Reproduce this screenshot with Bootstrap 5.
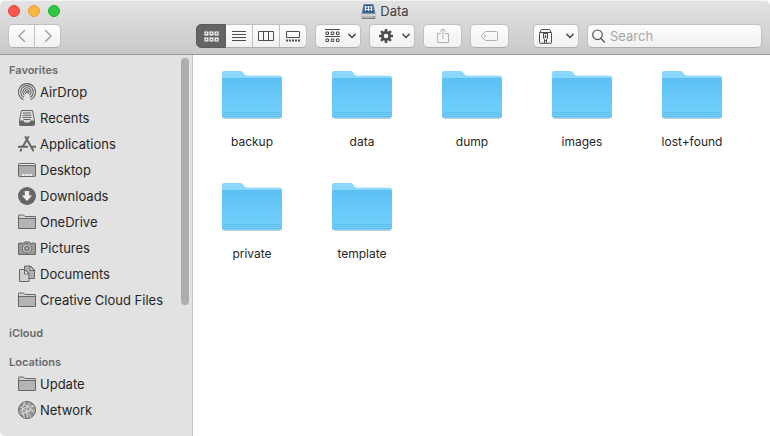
<!DOCTYPE html>
<html lang="en">
<head>
<meta charset="utf-8">
<meta name="viewport" content="width=device-width, initial-scale=1">
<title>Data</title>
<link href="https://cdn.jsdelivr.net/npm/bootstrap@5.3.0/dist/css/bootstrap.min.css" rel="stylesheet">
<style>
  body { font-family: Inter, "Liberation Sans", sans-serif; font-size: 13px; line-height: 18px; color: #262626; background: #fff; }
  svg { display: block; flex: none; }
  .window { border-radius: 6px 6px 5px 5px; overflow: hidden; }
  .window-head { background: linear-gradient(#e4e4e4, #c9c9c9); border-bottom: 1px solid #989898; box-shadow: inset 0 1px #f4f4f4; }
  .title-row { display: grid; grid-template-columns: 1fr auto 1fr; height: 24px; padding: 0 8px; }
  .lights { padding-top: 5px; }
  .light { width: 12px; height: 12px; border-radius: 50%; border: 1px solid; padding: 0; }
  .light-close { background: #fc5650; border-color: #e0443e; }
  .light-min { background: #fdb63d; border-color: #dfa035; }
  .light-max { background: #2bc840; border-color: #1fae33; }
  .title-text { font-size: 13px; line-height: 22px; color: #404040; }
  .toolbar { padding: 0 8px 6px; gap: 8px; }
  .tool { height: 24px; min-width: 0; padding: 0; border: 1px solid #c0c0c0; border-bottom-color: #adadad; border-radius: 5px; background: linear-gradient(#fdfdfd, #f1f1f1); color: #4c4c4c; display: flex; align-items: center; justify-content: center; }
  .tool:hover { color: #222; border-color: #aaa; }
  .tool-nav { width: 27px; color: #9b9b9b; }
  .tool-view { width: 28px; flex: none; }
  .tool-view.active { width: 30px; background: #646464; border-color: #5c5c5c; color: #fff; }
  .tool-menu { width: 46px; justify-content: space-between; padding: 0 3px 0 5px; }
  .tool-dim { width: 39px; color: #b0b0b0; }
  .nav-slot { width: 180px; }
  .search-box { height: 24px; border: 1px solid #c0c0c0; border-bottom-color: #adadad; border-radius: 5px; background: linear-gradient(#fdfdfd, #f1f1f1); padding: 0 4px; gap: 5px; color: #555; min-width: 0; }
  .search-box input { font-size: 13px; line-height: 18px; outline: 0; min-width: 0; }
  .search-box input::placeholder { color: #a6a6a6; opacity: 1; }
  .side { width: 193px; flex: none; background: #e2e2e2; border-right: 1px solid #c4c4c4; padding-top: 6px; }
  .side h2 { font-size: 11px; line-height: 18px; font-weight: 600; color: #6a6a6a; margin: 0; padding-left: 9px; }
  .side section { margin-bottom: 11px; }
  .side-link { display: flex; align-items: center; gap: 4px; height: 26px; padding-left: 18px; color: #262626; text-decoration: none; }
  .side-link svg { color: #666; }
  .thumb { position: absolute; top: 3px; right: 3px; width: 8px; height: 247px; border-radius: 4px; background: #adadad; }
  .files { display: grid; grid-template-columns: repeat(auto-fill, 110px); grid-auto-rows: 112px; align-content: start; padding: 14px 4px 0; }
  .file { display: flex; flex-direction: column; align-items: center; gap: 13px; font-size: 12px; color: #262626; text-decoration: none; }
</style>
</head>
<body>
<svg width="0" height="0" class="position-absolute" aria-hidden="true">
  <defs>
    <linearGradient id="blue" x1="0" y1="0" x2="0" y2="1"><stop offset="0" stop-color="#5cc1f5"/><stop offset="1" stop-color="#74d0fb"/></linearGradient>
    <symbol id="big-folder" viewBox="0 0 60 51">
      <path d="M1 48h58a2 2 0 0 1-2 2H3a2 2 0 0 1-2-2z" fill="#c9cdd0"/>
      <path d="M0 4a2 2 0 0 1 2-2h16c1.500 0 2.200.6 3 1.600l1.600 2c.7.8 1.400 1.100 2.500 1.100H58a2 2 0 0 1 2 2V20H0z" fill="#8ad7fd"/>
      <path d="M0 11a2 2 0 0 1 2-2h56a2 2 0 0 1 2 2v36a2 2 0 0 1-2 2H2a2 2 0 0 1-2-2z" fill="url(#blue)"/>
      <path d="M1 9.500h58" stroke="#5dbcec" stroke-width=".8"/>
      <path d="M0 43.500h60M0 45.500h60M0 47.500h60" stroke="#5fbbe9" stroke-width=".7"/>
    </symbol>
    <symbol id="chev" viewBox="0 0 10 8"><path d="M1.800 2.300 5 5.500l3.200-3.200" fill="none" stroke="currentColor" stroke-width="1.600" stroke-linecap="round" stroke-linejoin="round"/></symbol>
    <symbol id="folder" viewBox="0 0 18 18">
      <path d="M.5 15.500v-13q0-.5.500-.5h4.500l1.500 1.500h10q.5 0 .5.500v11.500z" fill="#d2d2d2" stroke="currentColor"/>
      <path d="M1 6h16v9H1z" fill="#b4b4b4"/><path d="M1 5.500h16" stroke="currentColor"/>
    </symbol>
  </defs>
</svg>
<div class="window d-flex flex-column min-vh-100">
  <header class="window-head">
    <div class="title-row">
      <div class="lights d-flex gap-2">
        <button class="light light-close" aria-label="Close"></button>
        <button class="light light-min" aria-label="Minimize"></button>
        <button class="light light-max" aria-label="Zoom"></button>
      </div>
      <h1 class="title-text d-flex fw-normal m-0">
        <svg class="me-1 mt-1" width="15" height="15" viewBox="0 0 15 15"><path d="M2.500 0h10L15 11H0z" fill="#8b98a6"/><path d="M3 .5h9l1.400 8.500H1.600z" fill="#365f94"/><path d="M3.500 3h8M3.500 5.500h8M4.500 2v5M7.500 2v5M10.500 2v5" stroke="#e6edf6" stroke-width="1"/><path d="M0 10.500h15V14q0 1-1 1H1q-1 0-1-1z" fill="#b8b8b8"/><path d="M0 10.500h15v1H0z" fill="#ececec"/><path d="M1 14.500h13" stroke="#777"/><circle cx="12.500" cy="13" r=".8" fill="#42b84f"/></svg>Data
      </h1>
      <span></span>
    </div>
    <div class="toolbar d-flex" role="toolbar" aria-label="Toolbar">
      <div class="nav-slot d-flex flex-shrink-0" role="group">
        <div class="btn-group">
          <button class="btn tool tool-nav" aria-label="Back"><svg width="10" height="14" viewBox="0 0 10 14"><path d="M7.500 1.500 2 7l5.500 5.500" fill="none" stroke="currentColor" stroke-width="1.400" stroke-linecap="round"/></svg></button>
          <button class="btn tool tool-nav" aria-label="Forward"><svg width="10" height="14" viewBox="0 0 10 14"><path d="M2.500 1.500 8 7l-5.500 5.500" fill="none" stroke="currentColor" stroke-width="1.400" stroke-linecap="round"/></svg></button>
        </div>
      </div>
      <div class="btn-group flex-shrink-0" role="group" aria-label="View">
        <button class="btn tool tool-view active" aria-label="Icons"><svg width="15" height="11" viewBox="0 0 15 11" fill="none" stroke="currentColor" stroke-width="1.200"><path d="M1 1h2.800v2.800H1zM6.100 1h2.800v2.800H6.100zM11.200 1H14v2.800h-2.800zM1 7.200h2.800V10H1zM6.100 7.200h2.800V10H6.100zM11.200 7.200H14V10h-2.800z"/></svg></button>
        <button class="btn tool tool-view" aria-label="List"><svg width="14" height="12" viewBox="0 0 14 12"><path d="M0 1.500h14M0 4.500h14M0 7.500h14M0 10.500h14" stroke="currentColor"/></svg></button>
        <button class="btn tool tool-view" aria-label="Columns"><svg width="16" height="11" viewBox="0 0 16 11"><path d="M.5.5h15v9H.5zM5.500.5v9M10.500.5v9" fill="none" stroke="currentColor" stroke-linejoin="round"/></svg></button>
        <button class="btn tool tool-view" aria-label="Gallery"><svg width="14" height="11" viewBox="0 0 14 11"><path d="M.5.500h13v6H.5z" fill="none" stroke="currentColor" stroke-linejoin="round"/><path d="M0 9.500h14" stroke="currentColor" stroke-width="2" stroke-dasharray="2 1"/></svg></button>
      </div>
      <button class="btn tool tool-menu flex-shrink-0" aria-label="Group"><svg class="ms-1" width="15" height="14" viewBox="0 0 15 14" fill="none" stroke="currentColor"><path d="M0 .5h15M0 7.500h15M1 3h2.500v2.500H1zM6.200 3h2.600v2.500H6.200zM11.500 3H14v2.500h-2.500zM1 10h2.500v2.500H1zM6.200 10h2.600v2.500H6.200zM11.500 10H14v2.500h-2.500z"/></svg><svg width="10" height="8"><use href="#chev"/></svg></button>
      <button class="btn tool tool-menu flex-shrink-0" aria-label="Action"><svg class="ms-1" width="14" height="14" viewBox="-7 -7 14 14"><g fill="none" stroke="currentColor"><circle r="3.700" stroke-width="2.800"/><path d="M0-4.500V-7M0 4.500V7M-4.500 0H-7M4.500 0H7M-3.200-3.200-4.900-4.900M3.200 3.200 4.900 4.900M3.200-3.200 4.900-4.900M-3.200 3.200-4.900 4.900" stroke-width="2.600"/></g></svg><svg width="10" height="8"><use href="#chev"/></svg></button>
      <button class="btn tool tool-dim flex-shrink-0" aria-label="Share"><svg width="12" height="16" viewBox="0 0 12 16"><path d="M4 5.500H.5v9h11v-9H8M6 11V1M3 3.700 6 .8l3 2.900" fill="none" stroke="currentColor"/></svg></button>
      <button class="btn tool tool-dim flex-shrink-0" aria-label="Tags"><svg width="17" height="11" viewBox="0 0 17 11"><path d="M5 .5h10.500q1 0 1 1v7q0 1-1 1H5q-.7 0-1.200-.5L.8 5.700Q.3 5 .8 4.300l3-3.300Q4.300.5 5 .5z" fill="none" stroke="currentColor"/><circle cx="4" cy="5" r=".9" fill="currentColor"/></svg></button>
      <button class="btn tool tool-menu flex-shrink-0 ms-3" aria-label="Archive"><svg width="13" height="15" viewBox="0 0 13 15" fill="none" stroke="currentColor"><path d="M.5 4.500 2 1q.2-.5.800-.5h7.400q.6 0 .8.500l1.500 3.500v9q0 .8-.8.800H1.300q-.8 0-.8-.8zM.5 3.500h12"/><path d="M4.500 4v5l1 1.500V14M8.500 4v5l-1 1.500V14M4.500 4.500h4M5 11.500h3"/><path d="M6 6.500h1v2H6z" fill="currentColor" stroke-width=".6"/></svg><svg width="10" height="8"><use href="#chev"/></svg></button>
      <label class="search-box d-flex align-items-center flex-grow-1"><svg width="13" height="14" viewBox="0 0 13 14"><path d="m8.700 9.200 3.700 3.800" stroke="currentColor" stroke-width="1.300" stroke-linecap="round"/><circle cx="5.500" cy="5.800" r="4.800" fill="none" stroke="currentColor" stroke-width="1.200"/></svg><input class="flex-fill w-100 border-0 bg-transparent p-0" type="text" placeholder="Search" aria-label="Search"></label>
    </div>
  </header>
  <div class="d-flex flex-grow-1">
    <nav class="side position-relative" aria-label="Sidebar">
      <section>
        <h2>Favorites</h2>
        <a class="side-link" href="#"><svg width="18" height="18" viewBox="0 0 18 18"><g fill="none" stroke="currentColor" stroke-width="1.100" stroke-linecap="round"><path d="M5 16.600a8.500 8.500 0 1 1 8 0"/><path d="M5.600 14.200a6.300 6.300 0 1 1 6.800 0"/><path d="M6.200 11.900a4.100 4.100 0 1 1 5.600 0"/><path d="M7.700 10.300a2 2 0 1 1 2.600 0"/></g><circle cx="9" cy="9" r="1" fill="currentColor"/></svg>AirDrop</a>
        <a class="side-link" href="#"><svg width="18" height="18" viewBox="0 0 18 18"><path d="M3.500 1.500h11l2 10v4q0 1-1 1h-13q-1 0-1-1v-4z" fill="#ddd" stroke="currentColor"/><path d="M1.500 11.500h4q.5 2 2 2h3q1.500 0 2-2h4v4q0 1-1 1h-13q-1 0-1-1z" fill="currentColor"/><path d="M5 4h8M4.700 6.200h8.600M4.400 8.400h9.200M5.500 10.500h7" stroke="currentColor"/></svg>Recents</a>
        <a class="side-link" href="#"><svg width="18" height="18" viewBox="0 0 18 18"><g fill="none" stroke="currentColor" stroke-width="2" stroke-linecap="round"><path d="M10.300 2 5 11.300M7.500 2l7.700 13.500M3.200 14.500l-.6 1.200"/><path d="M0 11.700h10M13.500 11.700H18" stroke-linecap="butt"/></g></svg>Applications</a>
        <a class="side-link" href="#"><svg width="18" height="18" viewBox="0 0 18 18"><rect x=".5" y="2.500" width="17" height="13" rx="1" fill="#adadad" stroke="currentColor"/><path d="M1 3.500h16" stroke="#eee"/><path d="M1 4.500h16" stroke="currentColor"/><path d="M4 14h10" stroke="#eee" stroke-width="2" stroke-dasharray="2 .67"/></svg>Desktop</a>
        <a class="side-link" href="#"><svg width="18" height="18" viewBox="0 0 18 18"><circle cx="9" cy="9" r="9" fill="currentColor"/><path d="M6.800 4h4.400v4.500h3L9 14 3.800 8.500h3z" fill="#ececec"/></svg>Downloads</a>
        <a class="side-link" href="#"><svg width="18" height="18"><use href="#folder"/></svg>OneDrive</a>
        <a class="side-link" href="#"><svg width="18" height="18" viewBox="0 0 18 18"><path d="M.5 4.500h1V4h2.500v.5h1.200L6.500 3h5l1.300 1.500H14V4h2.500v.5h1v11H.5z" fill="#999" stroke="currentColor"/><circle cx="9" cy="9.500" r="4.500" fill="#ddd" stroke="currentColor"/><circle cx="9" cy="9.500" r="2.600" fill="#999" stroke="currentColor"/></svg>Pictures</a>
        <a class="side-link" href="#"><svg width="18" height="18" viewBox="0 0 18 18"><path d="M6.500 1h6l4 4v8.500h-10z" fill="#b0b0b0" stroke="currentColor"/><path d="M12 1v4.500h4.500z" fill="#ddd" stroke="currentColor"/><path d="M1.500 4.500h5.500l4 4v8h-9.500z" fill="#cfcfcf" stroke="currentColor"/><path d="M6.500 4.500V9H11z" fill="#eee" stroke="currentColor"/></svg>Documents</a>
        <a class="side-link" href="#"><svg width="18" height="18"><use href="#folder"/></svg>Creative Cloud Files</a>
      </section>
      <section><h2>iCloud</h2></section>
      <section>
        <h2>Locations</h2>
        <a class="side-link" href="#"><svg width="18" height="18"><use href="#folder"/></svg>Update</a>
        <a class="side-link" href="#"><svg width="18" height="18" viewBox="0 0 18 18"><circle cx="9" cy="9" r="8.500" fill="#929292" stroke="currentColor"/><g fill="none" stroke="#ddd" stroke-width=".9"><path d="M2 5.500Q9 9 13 16M5 2.500Q12 6 16 12M7 1Q2 9 6.500 16.500M12 1.500Q6 8 10 17M1.500 11Q9 3 16 5.500M2.500 13Q9 10 17 9M15 4q-2 6-11 9"/></g></svg>Network</a>
      </section>
      <div class="thumb"></div>
    </nav>
    <main class="files flex-grow-1">
      <a class="file" href="#"><svg width="60" height="51"><use href="#big-folder"/></svg>backup</a>
      <a class="file" href="#"><svg width="60" height="51"><use href="#big-folder"/></svg>data</a>
      <a class="file" href="#"><svg width="60" height="51"><use href="#big-folder"/></svg>dump</a>
      <a class="file" href="#"><svg width="60" height="51"><use href="#big-folder"/></svg>images</a>
      <a class="file" href="#"><svg width="60" height="51"><use href="#big-folder"/></svg>lost+found</a>
      <a class="file" href="#"><svg width="60" height="51"><use href="#big-folder"/></svg>private</a>
      <a class="file" href="#"><svg width="60" height="51"><use href="#big-folder"/></svg>template</a>
    </main>
  </div>
</div>
<script src="https://cdn.jsdelivr.net/npm/bootstrap@5.3.0/dist/js/bootstrap.bundle.min.js"></script>
</body>
</html>
